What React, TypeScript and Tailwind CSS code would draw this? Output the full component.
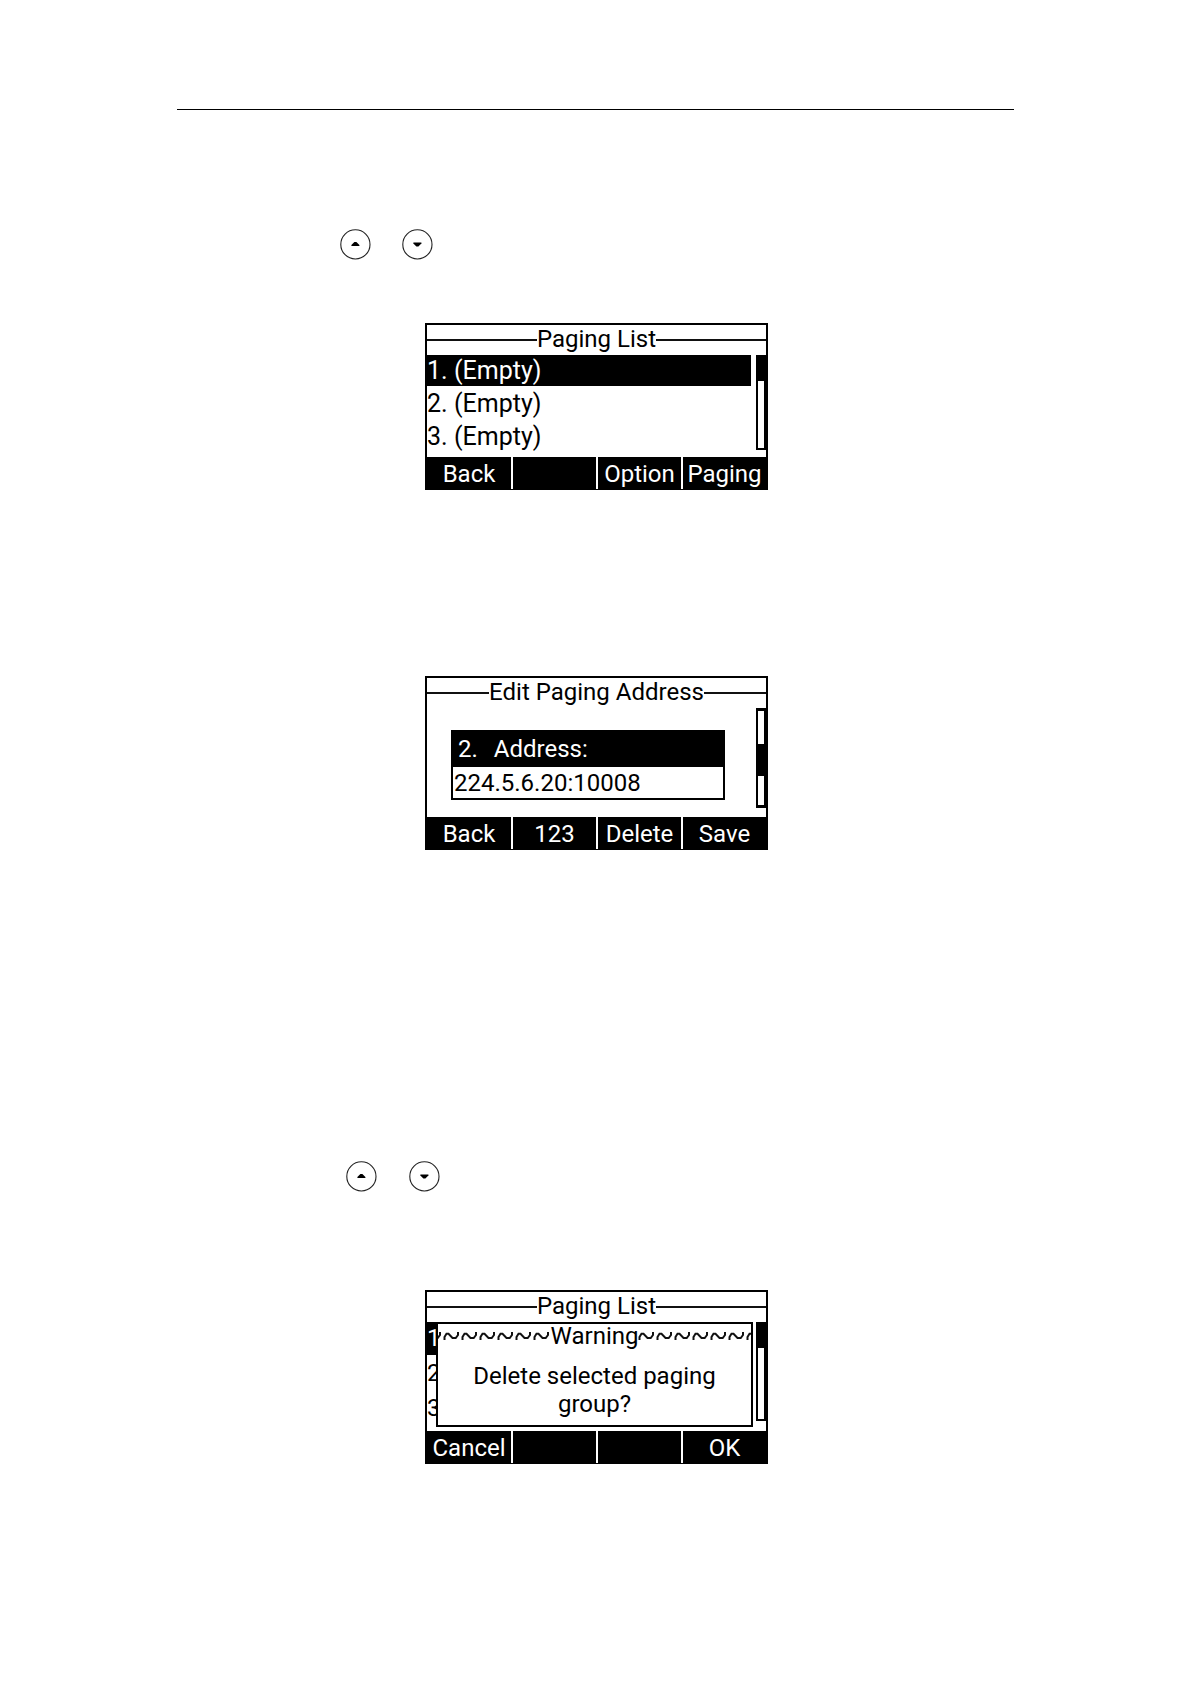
import type { ReactNode } from "react";

interface ScreenProps {
  title: string;
  keys: string[];
  children: ReactNode;
}

function ArrowKey({ dir }: { dir: "up" | "down" }) {
  return (
    <button aria-label={dir === "up" ? "Up" : "Down"} className="block size-8">
      <svg viewBox="0 0 32 32" className="size-8" fill="none">
        <circle cx="16.4" cy="16.4" r="14.6" stroke="#222" strokeWidth="1.1" />
        {dir === "up" ? (
          <path d="M12.4 18h8v-1l-3-3h-2l-3 3z" fill="#000" />
        ) : (
          <path d="M12.4 14.6h8v1l-3 2.8h-2l-3-2.8z" fill="#000" />
        )}
      </svg>
    </button>
  );
}

// LCD frame: title on a rule, body, four soft keys
function Screen({ title, keys, children }: ScreenProps) {
  return (
    <section className="w-[343px] border-2 border-b border-black bg-white text-2xl">
      <div className="flex h-[30px] items-center">
        <span className="h-[2px] flex-1 bg-[#111]" />
        <h2 className="pb-[2px] leading-[28px]">{title}</h2>
        <span className="h-[2px] flex-1 bg-[#111]" />
      </div>
      {children}
      <div className="grid grid-cols-[84px_83px_83px_83px] gap-[2px] bg-white">
        {keys.map((key, i) => (
          <button
            key={i}
            aria-label={key || "Unused key"}
            className="h-8 bg-black text-center leading-[34px] text-white"
          >
            {key}
          </button>
        ))}
      </div>
    </section>
  );
}

function Row({ n, active }: { n: number; active?: boolean }) {
  return (
    <li className={`flex h-[31px] text-[25px] leading-[31px] ${active ? "bg-black text-white" : ""}`}>
      <span className="w-[27px]">{n}.</span>
      <span>(Empty)</span>
    </li>
  );
}

// wavy line beside the warning title
function Wave({ side }: { side: "left" | "right" }) {
  return (
    <span className={`flex h-2 min-w-0 flex-1 overflow-hidden ${side === "left" ? "justify-end" : "justify-start"}`}>
      <svg width="126" height="8" viewBox="0 0 126 8" className="shrink-0" fill="none" stroke="#111" strokeWidth="2">
        {[0, 18, 36, 54, 72, 90, 108].map((x) => (
          <path key={x} transform={`translate(${x} 0)`} d="M1.5 8V5L3.5 1.8h2L9.5 6h3.2l2.3-3V0" />
        ))}
      </svg>
    </span>
  );
}

export default function App() {
  return (
    <main className="min-h-screen bg-white pt-[109px] font-['Roboto',sans-serif] text-black">
      <div className="mx-auto w-[838px] max-w-full">
        <hr className="ml-px border-t border-black" />

        <div className="mt-[118px] ml-[163px] flex gap-[30px]">
          <ArrowKey dir="up" />
          <ArrowKey dir="down" />
        </div>

        <div className="mt-[63px] flex justify-center pl-[3px]">
          <Screen title="Paging List" keys={["Back", "", "Option", "Paging"]}>
            <div className="flex h-[102px]">
              <ol className="mr-[5px] flex flex-1 flex-col gap-[2px]">
                <Row n={1} active />
                <Row n={2} />
                <Row n={3} />
              </ol>
              <div className="flex h-[95px] w-[10px] flex-col bg-black pt-[26px] pb-[2px] pl-[2px]">
                <span className="w-[6px] flex-1 bg-white" />
              </div>
            </div>
          </Screen>
        </div>

        <div className="mt-[186px] flex justify-center pl-[3px]">
          <Screen title="Edit Paging Address" keys={["Back", "123", "Delete", "Save"]}>
            <div className="flex h-[109px]">
              <div className="mt-[22px] mr-[31px] ml-6 h-[70px] flex-1 border-2 border-black bg-white">
                <label htmlFor="address" className="flex h-[35px] gap-4 bg-black pl-[5px] leading-[34px] text-white">
                  <span>2.</span>
                  <span>Address:</span>
                </label>
                <input
                  id="address"
                  defaultValue="224.5.6.20:10008"
                  className="block h-[31px] w-full pl-px outline-none"
                />
              </div>
              <div className="flex h-[100px] w-[10px] flex-col justify-between bg-black pt-[3px] pb-[3px] pl-[2px]">
                <span className="h-[33px] w-[6px] bg-white" />
                <span className="h-[29px] w-[6px] bg-white" />
              </div>
            </div>
          </Screen>
        </div>

        <div className="mt-[310px] ml-[169px] flex gap-[31px]">
          <ArrowKey dir="up" />
          <ArrowKey dir="down" />
        </div>

        <div className="mt-[98px] flex justify-center pl-[3px]">
          <Screen title="Paging List" keys={["Cancel", "", "", "OK"]}>
            <div className="flex h-[109px]">
              {/* list numbers that show beside the dialog */}
              <ol className="flex w-[9px] shrink-0 flex-col gap-[2px] overflow-hidden leading-[33px]">
                <li className="h-[33px] bg-black text-white">1</li>
                <li className="h-[33px]">2</li>
                <li className="h-[33px]">3</li>
              </ol>
              <div
                role="alertdialog"
                className="mr-[3px] mb-1 min-w-0 flex-1 border-2 border-black bg-white text-center"
              >
                <h3 className="flex items-center leading-6">
                  <Wave side="left" />
                  <span>Warning</span>
                  <Wave side="right" />
                </h3>
                <p className="mt-[14px] leading-[28px]">
                  Delete selected paging
                  <br />
                  group?
                </p>
              </div>
              <div className="flex h-[99px] w-[10px] shrink-0 flex-col bg-black pt-[26px] pb-[2px] pl-[2px]">
                <span className="w-[6px] flex-1 bg-white" />
              </div>
            </div>
          </Screen>
        </div>
      </div>
    </main>
  );
}
